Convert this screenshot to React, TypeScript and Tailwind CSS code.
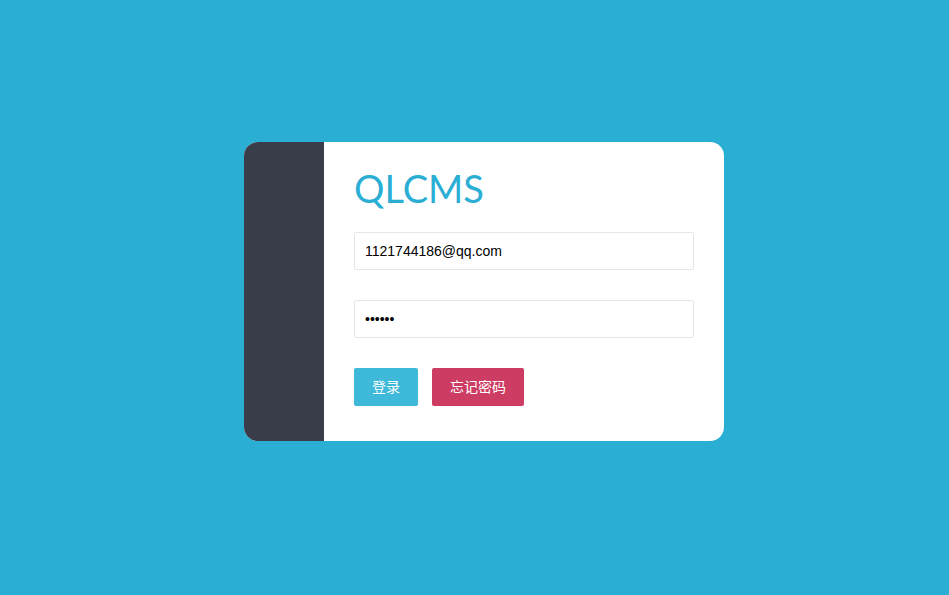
import React from "react";

export default function App() {
  return (
    <div className="min-h-[595px] w-full bg-[#2aaed4] pl-[244px] pt-[142px]" style={{ fontFamily: '"Liberation Sans", "Noto Sans CJK SC", sans-serif' }}>
      <div className="flex h-[299px] w-[480px] overflow-hidden rounded-[14px] bg-white">
        <div className="w-[80px] bg-[#393d49]" />
        <div className="flex flex-1 flex-col pl-[30px] pr-[30px] pt-[22px]">
          <h1 className="text-[38px] leading-[48px] font-normal text-[#2aaed4]" style={{ fontFamily: 'Lato, "Noto Sans", sans-serif' }}>QLCMS</h1>
          <input
            className="mt-[20px] h-[38px] w-[340px] rounded-[2px] border border-[#e6e6e6] px-[10px] text-[14px] text-black outline-none"
            defaultValue="1121744186@qq.com"
          />
          <input
            type="password"
            className="mt-[30px] h-[38px] w-[340px] rounded-[2px] border border-[#e6e6e6] px-[10px] text-[14px] text-black outline-none"
            defaultValue="123456"
          />
          <div className="mt-[30px] flex gap-[14px]">
            <button className="h-[38px] w-[64px] rounded-[2px] bg-[#3fb9da] text-[14px] text-white">登录</button>
            <button className="h-[38px] w-[92px] rounded-[2px] bg-[#cd3c62] text-[14px] text-white">忘记密码</button>
          </div>
        </div>
      </div>
    </div>
  );
}
